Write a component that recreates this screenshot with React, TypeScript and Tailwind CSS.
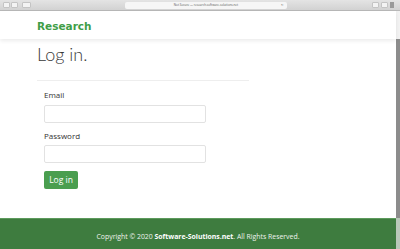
import React from "react";

export default function App() {
  return (
    <div className="w-[400px] h-[249px] overflow-hidden flex flex-col bg-white" style={{ fontFamily: '"Open Sans", sans-serif' }}>
      {/* browser chrome */}
      <div className="h-[11px] shrink-0 flex items-center bg-gradient-to-b from-[#e4e4e4] to-[#d2d2d2] border-b border-[#b8b8b8] px-[3px]">
        <div className="flex gap-[1px]">
          <div className="w-[7px] h-[6px] rounded-[1px] bg-[#f3f3f3] border border-[#c4c4c4]" />
          <div className="w-[7px] h-[6px] rounded-[1px] bg-[#f3f3f3] border border-[#c4c4c4]" />
        </div>
        <div className="ml-[4px] w-[9px] h-[6px] rounded-[1px] bg-[#f3f3f3] border border-[#c4c4c4]" />
        <div className="ml-[94px] w-[162px] h-[7px] rounded-[2px] bg-[#f6f6f6] flex items-center justify-center relative">
          <span className="text-[3px] leading-none text-[#555]">Not Secure — research.software-solutions.net</span>
          <span className="absolute right-[3px] text-[3px] leading-none text-[#777]">↻</span>
        </div>
        <div className="ml-auto flex gap-[2px] mr-[3px]">
          <div className="w-[7px] h-[6px] rounded-[1px] bg-[#f3f3f3] border border-[#c4c4c4]" />
          <div className="w-[7px] h-[6px] rounded-[1px] bg-[#f3f3f3] border border-[#c4c4c4]" />
          <div className="w-[4px] h-[6px] bg-[#9a9a9a]" />
        </div>
      </div>
      <div className="flex-1 flex">
        <div className="flex-1 flex flex-col">
          {/* header */}
          <div className="h-[28px] shrink-0 flex items-center pl-[37px] pt-[3px] shadow-[0_2px_4px_rgba(0,0,0,0.08)] relative z-10">
            <span className="text-[10.5px] font-bold text-[#3f9e47]" style={{ fontFamily: '"DejaVu Sans", sans-serif' }}>Research</span>
          </div>
          <div className="flex-1 pl-[37px] pt-[3px]">
            <div className="w-[212px]">
              <h1 className="text-[18px] font-light text-[#3a3a3a] leading-[24px]" style={{ fontFamily: 'Lato, sans-serif' }}>Log in.</h1>
              <div className="mt-[14px] border-t border-[#eeeeee]" />
              <div className="pl-[7px] pt-[8px]">
                <div className="text-[8px] text-[#333] leading-[11px]">Email</div>
                <div className="mt-[5px] w-[162px] h-[18px] border border-[#e2e2e2] rounded-[2px] bg-white" />
                <div className="mt-[7px] text-[8px] text-[#333] leading-[11px]">Password</div>
                <div className="mt-[4px] w-[162px] h-[18px] border border-[#e2e2e2] rounded-[2px] bg-white" />
                <div className="mt-[8px] w-[34px] h-[18px] rounded-[2px] bg-[#4a9e4f] flex items-center justify-center text-[8.5px] text-white">Log in</div>
              </div>
            </div>
          </div>
          {/* footer */}
          <div className="h-[31px] shrink-0 bg-[#3e7c3f] border-t border-[#5c9a5c] flex items-center justify-center pt-[6px]">
            <span className="text-[6.9px] text-[#eef3ee] leading-none">
              Copyright © 2020 <span className="font-bold text-white">Software-Solutions.net</span>. All Rights Reserved.
            </span>
          </div>
        </div>
        <div className="w-[4px] flex flex-col">
          <div className="h-[28px] bg-[#f2f2f2]" />
          <div className="flex-1 bg-[#8c8c8c]" />
          <div className="h-[31px] bg-[#b9c9b9]" />
        </div>
      </div>
    </div>
  );
}
